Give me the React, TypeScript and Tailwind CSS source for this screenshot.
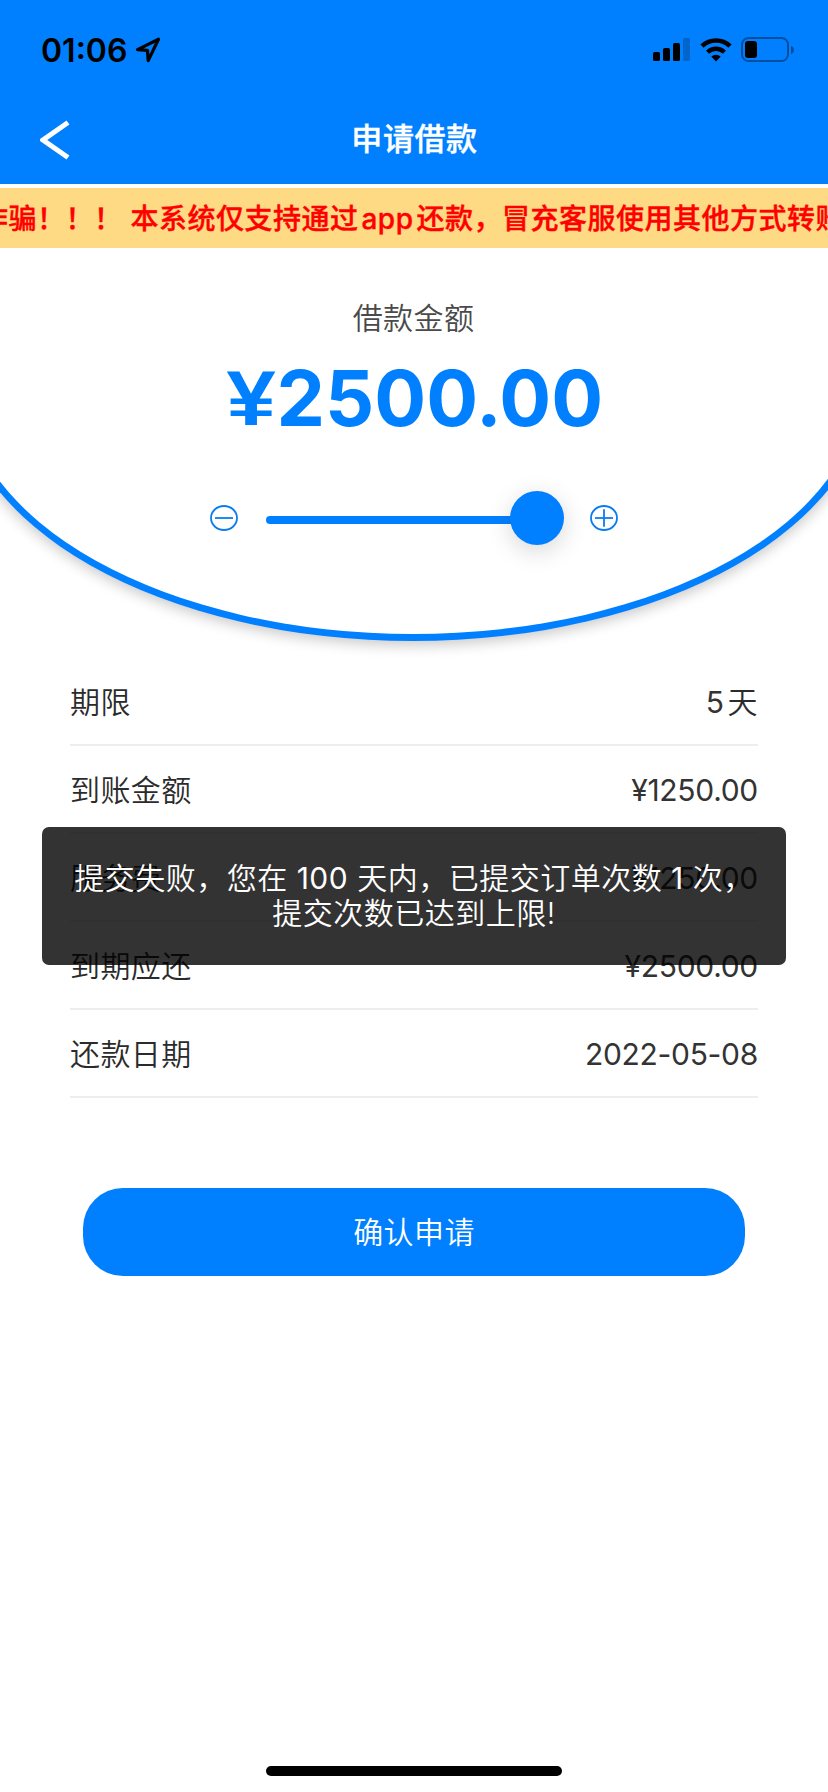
import React from 'react';

const rows = [
  { label: '期限', value: '5', unit: '天' },
  { label: '到账金额', value: '¥1250.00' },
  { label: '服务费', value: '¥1250.00' },
  { label: '到期应还', value: '¥2500.00' },
  { label: '还款日期', value: '2022-05-08' },
];

function StatusBar() {
  return (
    <div className="flex h-[100px] items-center justify-between pl-[41px] pr-[33px] text-black">
      <div className="flex items-center gap-[8px]">
        <span className="pt-px text-[32px] font-semibold leading-none">01:06</span>
        <svg width="26" height="26" viewBox="0 0 26 26" fill="none">
          <path d="M2.5 12.6 23.5 2.2 13.2 23.6 12.5 13.3Z" stroke="currentColor" strokeWidth="3.2" strokeLinejoin="round" />
        </svg>
      </div>
      <div className="flex items-center">
        <svg width="38" height="24" viewBox="0 0 38 24">
          <rect x="0" y="14" width="7" height="9" rx="1.6" />
          <rect x="10" y="10" width="7" height="13" rx="1.6" />
          <rect x="20" y="5" width="7" height="18" rx="1.6" />
          <rect x="30" y="0" width="7" height="23" rx="1.6" opacity="0.2" />
        </svg>
        <svg className="ml-[9px]" width="32" height="24" viewBox="0 0 32 24" fill="none">
          <path d="M2 8.2A20 20 0 0 1 30 8.2" stroke="currentColor" strokeWidth="4.6" />
          <path d="M7.6 14.2A12 12 0 0 1 24.4 14.2" stroke="currentColor" strokeWidth="4.4" />
          <path d="M11.3 18.6A7 7 0 0 1 20.7 18.6L16 23.4Z" fill="currentColor" />
        </svg>
        <svg className="ml-[9px]" width="54" height="26" viewBox="0 0 54 26">
          <rect x="1" y="1" width="46" height="23" rx="6.5" fill="none" stroke="currentColor" strokeWidth="2" opacity="0.38" />
          <rect x="4" y="4" width="12" height="17" rx="3" />
          <path d="M50 9a4.2 4.2 0 0 1 0 8Z" opacity="0.4" />
        </svg>
      </div>
    </div>
  );
}

function Header() {
  return (
    <header className="h-[184px] bg-[#0080ff]">
      <StatusBar />
      <div className="flex h-[80px] items-center px-[40px] text-white">
        <svg width="30" height="40" viewBox="0 0 30 40" fill="none">
          <path d="M28 2.5 3 20 28 37.5" stroke="currentColor" strokeWidth="5" />
        </svg>
        <h1 className="flex-1 pb-[3px] pr-[29px] text-center text-[31px] font-medium leading-none tracking-[0.6px] [-webkit-text-stroke:0.4px]">申请借款</h1>
      </div>
    </header>
  );
}

function StepIcon({ plus = false }: { plus?: boolean }) {
  return (
    <svg width="28" height="26" viewBox="0 0 28 26" fill="none" stroke="#0a7cf0" strokeWidth="1.8">
      <ellipse cx="14" cy="13" rx="13" ry="12" />
      <path d="M5 13h18" />
      {plus && <path d="M14 4.2v17.6" />}
    </svg>
  );
}

function AmountPanel() {
  return (
    <section className="h-[410px] overflow-hidden">
      <div className="-ml-[43px] flex h-[393px] w-[912px] flex-col items-center border-[7px] border-t-0 border-[#0080ff] bg-white pt-[50px] shadow-[0_4px_14px_rgba(0,0,0,0.22)] [border-radius:0_0_50%_50%/0_0_258px_258px]">
        <p className="pl-px text-[30px] font-[350] leading-[40px] tracking-[0.4px] text-[#4a4a4a]">借款金额</p>
        <p className="mt-[20px] flex pl-[10px] text-[77px] font-bold leading-[80px] text-[#0080ff]">
          <span className="mr-px inline-block origin-right scale-x-115 font-['Liberation_Sans',sans-serif]">¥</span>
          <span>2500.00</span>
        </p>
        <div className="mt-[53px] flex items-center pl-[2px]">
          <StepIcon />
          <div className="ml-[28px] flex h-[54px] w-[298px] items-center">
            <div className="mt-[4px] h-[8px] flex-1 rounded-l-full bg-[#0080ff]" />
            <div className="-ml-px size-[54px] rounded-full bg-[#0080ff] shadow-[0_6px_24px_rgba(0,0,0,0.16)]" />
          </div>
          <div className="ml-[26px]">
            <StepIcon plus />
          </div>
        </div>
      </div>
    </section>
  );
}

function Toast() {
  return (
    <div className="absolute left-[42px] top-[827px] h-[138px] w-[744px] rounded-[7px] bg-black/80 pt-[34px] text-center text-[30px] font-[350] leading-[35px] tracking-[0.5px] text-white">
      <p className="whitespace-nowrap">提交失败，您在 <span className="font-normal">100</span> 天内，已提交订单次数 <span className="font-normal">1</span> 次，</p>
      <p className="whitespace-nowrap">提交次数已达到上限!</p>
    </div>
  );
}

export default function App() {
  return (
    <div className="relative flex h-[1792px] w-[828px] flex-col overflow-hidden bg-white font-['Inter','Noto_Sans_CJK_SC',sans-serif]">
      <Header />
      <div className="mt-[4px] h-[60px] overflow-hidden bg-[#ffda85]">
        <p className="-ml-[20px] whitespace-nowrap pt-px text-[28px] font-medium leading-[60px] tracking-[0.5px] text-[#ff0000] [-webkit-text-stroke:0.4px]">
          诈骗！！！ 本系统仅支持通过<span className="mx-[3px]">app</span>还款，冒充客服使用其他方式转账
        </p>
      </div>
      <AmountPanel />
      <ul className="mx-[70px]">
        {rows.map((row) => (
          <li key={row.label} className="flex h-[88px] items-center justify-between border-b-2 border-[#eeeeee] pt-[2px] text-[30px] font-[350] tracking-[0.4px] text-[#2b2b2b]">
            <span>{row.label}</span>
            <span className="flex items-center gap-[4px]">
              <span className="pt-px font-normal tracking-[-0.3px] text-[#333]">{row.value}</span>
              {row.unit && <span>{row.unit}</span>}
            </span>
          </li>
        ))}
      </ul>
      <button className="ml-[83px] mt-[90px] h-[88px] w-[662px] rounded-[40px] bg-[#0080ff] text-[30px] font-[350] tracking-[0.4px] text-white">
        确认申请
      </button>
      <div className="mx-auto mb-[16px] mt-auto h-[10px] w-[296px] rounded-full bg-black" />
      <Toast />
    </div>
  );
}
